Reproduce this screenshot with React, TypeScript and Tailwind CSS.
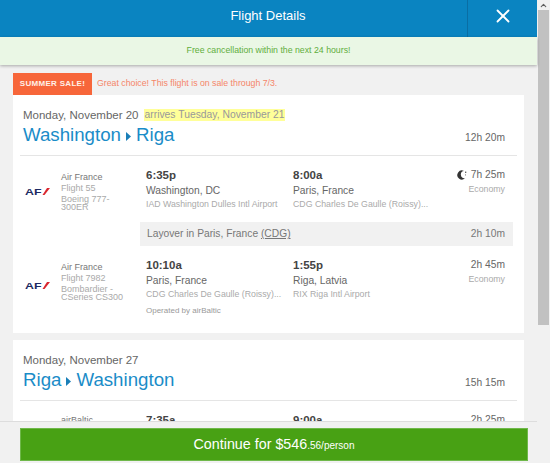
import { ChevronUp, X } from "lucide-react";

interface Leg {
  carrier: string;
  flight: string;
  plane?: string;
  depart: string;
  departCity: string;
  departAirport: string;
  arrive: string;
  arriveCity: string;
  arriveAirport: string;
  duration: string;
  overnight?: boolean;
  operatedBy?: string;
}

const legsOut: Leg[] = [
  {
    carrier: "Air France",
    flight: "Flight 55",
    plane: "Boeing 777-300ER",
    depart: "6:35p",
    departCity: "Washington, DC",
    departAirport: "IAD Washington Dulles Intl Airport",
    arrive: "8:00a",
    arriveCity: "Paris, France",
    arriveAirport: "CDG Charles De Gaulle (Roissy)...",
    duration: "7h 25m",
    overnight: true,
  },
  {
    carrier: "Air France",
    flight: "Flight 7982",
    plane: "Bombardier - CSeries CS300",
    depart: "10:10a",
    departCity: "Paris, France",
    departAirport: "CDG Charles De Gaulle (Roissy)...",
    arrive: "1:55p",
    arriveCity: "Riga, Latvia",
    arriveAirport: "RIX Riga Intl Airport",
    duration: "2h 45m",
    operatedBy: "Operated by airBaltic",
  },
];

function AirFranceLogo() {
  return (
    <div className="flex items-center w-[25px] ml-[12px] shrink-0">
      <span className="text-[9.5px] leading-none font-bold text-[#1c2a63] [transform:scaleX(1.3)] origin-left">AF</span>
      <svg width="8" height="7" viewBox="0 0 8 7" className="ml-[4px]">
        <path d="M5 0H8L2.5 7H0.5Z" fill="#d9262e" />
      </svg>
    </div>
  );
}

function MoonIcon() {
  return (
    <svg width="10" height="10" viewBox="0 0 10 10" className="mr-[4px]">
      <path d="M7 1A4.5 4.5 0 1 0 8 8.2A3.6 3.6 0 0 1 7 1Z" fill="#333333" />
      <rect x="8" y="1.6" width="1.3" height="1.3" fill="#555555" />
      <rect x="8" y="4.4" width="1" height="1" fill="#777777" />
    </svg>
  );
}

function Column({ time, city, airport, className }: { time: string; city: string; airport: string; className: string }) {
  return (
    <div className={className}>
      <div className="text-[11.5px] leading-[16px] font-bold text-[#444444]">{time}</div>
      <div className="text-[10.25px] leading-[15px] text-[#666666]">{city}</div>
      <div className="text-[8.75px] leading-[12px] text-[#aaaaaa] whitespace-nowrap">{airport}</div>
    </div>
  );
}

function LegRow({ leg }: { leg: Leg }) {
  return (
    <div className="flex">
      <div className={leg.operatedBy ? "flex items-center self-start h-[45px] mt-[6px]" : "flex items-center self-start h-[45px] mt-[2px]"}>
        <AirFranceLogo />
      </div>
      <div className="w-[85px] ml-[11px] shrink-0 pt-[5px]">
        <div className="text-[9px] leading-[11px] text-[#777777]">{leg.carrier}</div>
        <div className="text-[9px] leading-[11px] text-[#aaaaaa]">{leg.flight}</div>
        <div className="text-[9px] leading-[8px] mt-[1px] text-[#aaaaaa] w-[64px]">{leg.plane}</div>
      </div>
      <div className="flex-1">
        <div className="flex">
          <Column className="w-[147px] shrink-0" time={leg.depart} city={leg.departCity} airport={leg.departAirport} />
          <Column className="flex-1" time={leg.arrive} city={leg.arriveCity} airport={leg.arriveAirport} />
          <div className="text-right w-[70px]">
            <div className="flex items-center justify-end text-[10.25px] leading-[16px] text-[#666666]">
              {leg.overnight && <MoonIcon />}
              {leg.duration}
            </div>
            <div className="text-[8.75px] leading-[12px] text-[#aaaaaa]">Economy</div>
          </div>
        </div>
        {leg.operatedBy && <div className="text-[8px] leading-[10px] mt-[6px] font-medium text-[#999999]">{leg.operatedBy}</div>}
      </div>
    </div>
  );
}

function CardHeader({ date, arrives, from, to, total }: { date: string; arrives?: string; from: string; to: string; total: string }) {
  return (
    <div className="mx-[7px] px-[3px] pt-[13px] h-[61px] border-b border-[#e5e5e5]">
      <div className="flex items-center h-[14px]">
        <span className="text-[11.5px] leading-[14px] text-[#666666]">{date}</span>
        {arrives && <span className="ml-[6px] text-[10.35px] leading-[12px] text-[#999999] bg-[#ffff99]">{arrives}</span>}
      </div>
      <div className="flex items-end justify-between mt-[1px]">
        <div className="flex items-center text-[18.7px] leading-[24px] text-[#1a8cc8]">
          {from}
          <svg width="5" height="9" viewBox="0 0 5 9" className="mx-[5px] mt-[2px]">
            <path d="M0 0L5 4.5L0 9Z" fill="#1a7fb8" />
          </svg>
          {to}
        </div>
        <div className="text-[10.25px] leading-[14px] text-[#666666] mr-[9px] mb-[2px]">{total}</div>
      </div>
    </div>
  );
}

export default function App() {
  return (
    <div className="flex w-[550px] h-[463px] overflow-hidden bg-[#f1f1f1] font-['Liberation_Sans',Arial,sans-serif]">
      <div className="flex flex-col w-[537px] h-full">
        <div className="flex h-[37px] bg-[#0a84c1] shrink-0">
          <div className="w-[468px] pl-[69px] pb-[6px] flex items-center justify-center border-r border-[#0a6ea4] text-[13px] text-white">Flight Details</div>
          <div className="flex-1 pb-[6px] flex items-center justify-center">
            <X size={22} color="#ffffff" strokeWidth={2} />
          </div>
        </div>
        <div className="h-[28px] shrink-0 flex items-center justify-center bg-[#eaf7e5] text-[8.75px] text-[#5fae3c] shadow-[0_1px_3px_rgba(0,0,0,0.3)] relative">
          Free cancellation within the next 24 hours!
        </div>
        <div className="flex-1 overflow-hidden pt-[8px] px-[13px]">
          <div className="flex items-center h-[22px]">
            <div className="h-full w-[79px] flex items-center justify-center bg-[#f7663a] text-[8px] font-bold text-[#fff0e8] tracking-[0.3px]">SUMMER SALE!</div>
            <div className="ml-[5px] text-[8.75px] text-[#f58568]">Great choice! This flight is on sale through 7/3.</div>
          </div>
          <div className="bg-white h-[238px]">
            <CardHeader date="Monday, November 20" arrives="arrives Tuesday, November 21" from="Washington" to="Riga" total="12h 20m" />
            <div className="pt-[11px] pr-[19px]">
              <LegRow leg={legsOut[0]} />
            </div>
            <div className="flex justify-between items-center h-[24px] ml-[127px] mr-[11px] mt-[8px] pl-[7px] pr-[8px] bg-[#f1f1f1] text-[10.25px] text-[#777777]">
              <span>
                Layover in Paris, France <span className="underline">(CDG)</span>
              </span>
              <span>2h 10m</span>
            </div>
            <div className="pt-[11px] pr-[19px]">
              <LegRow leg={legsOut[1]} />
            </div>
          </div>
          <div className="bg-white mt-[7px] h-[100px]">
            <CardHeader date="Monday, November 27" from="Riga" to="Washington" total="15h 15m" />
            <div className="flex pt-[11px] pr-[19px]">
              <div className="w-[133px] pl-[48px] text-[9px] leading-[16px] text-[#777777] shrink-0">airBaltic</div>
              <div className="w-[147px] shrink-0 text-[11.5px] leading-[16px] font-bold text-[#444444]">7:35a</div>
              <div className="flex-1 text-[11.5px] leading-[16px] font-bold text-[#444444]">9:00a</div>
              <div className="text-[10.25px] leading-[16px] text-[#666666]">2h 25m</div>
            </div>
          </div>
        </div>
        <div className="h-[42px] shrink-0 bg-[#f1f1f1] border-t border-[#dddddd] pt-[6px] pl-[20px] pr-[9px] relative">
          <div className="h-[33px] flex items-center justify-center bg-[#48a114] border border-[#6fb84a] text-white">
            <span className="text-[14.3px]">Continue for $546</span>
            <span className="text-[10px] mt-[2px]">.56/person</span>
          </div>
        </div>
      </div>
      <div className="w-[13px] h-full bg-[#f1f1f1] flex flex-col items-center">
        <div className="h-[10px] flex items-center justify-center">
          <ChevronUp size={9} color="#606060" strokeWidth={3} />
        </div>
        <div className="w-[11px] h-[315px] bg-[#c1c1c1]" />
      </div>
    </div>
  );
}
